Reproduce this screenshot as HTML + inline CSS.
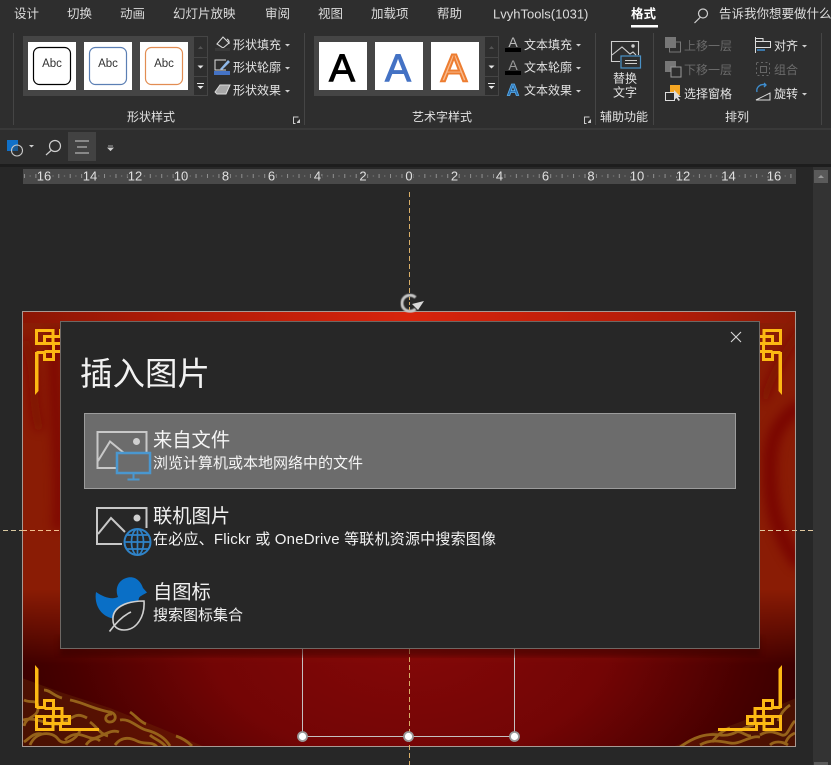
<!DOCTYPE html>
<html><head><meta charset="utf-8"><style>
html,body{margin:0;padding:0;background:#272727;width:831px;height:765px;overflow:hidden}
svg{display:block;font-family:"Liberation Sans","Noto Sans CJK SC",sans-serif}
text{dominant-baseline:central}
.tab{font-size:12.5px;fill:#dcdcdc}
.r{font-size:12px;fill:#e2e2e2}
.d{font-size:12px;fill:#6b6b6b}
.g{font-size:12px;fill:#d8d8d8}
.rul text{font-size:13px;fill:#e0e0e0;text-anchor:middle;stroke:#494949;stroke-width:3px;paint-order:stroke}
.knot{fill:none;stroke:#fdb913;stroke-width:3}
</style></head><body>
<svg width="831" height="765" viewBox="0 0 831 765" xmlns="http://www.w3.org/2000/svg">
<defs>
<linearGradient id="topband" x1="0" x2="1" y1="0" y2="0">
<stop offset="0" stop-color="#8a1604"/><stop offset=".15" stop-color="#a81a06"/><stop offset=".5" stop-color="#d8240c"/><stop offset=".85" stop-color="#b01c08"/><stop offset="1" stop-color="#8a1a05"/>
</linearGradient>
<radialGradient id="bot" gradientUnits="userSpaceOnUse" cx="409" cy="640" r="400" gradientTransform="translate(0 256) scale(1 .6)">
<stop offset="0" stop-color="#840808"/><stop offset=".5" stop-color="#730505"/><stop offset=".85" stop-color="#480000"/><stop offset="1" stop-color="#3a0000"/>
</radialGradient>
<linearGradient id="fade" gradientUnits="userSpaceOnUse" x1="0" x2="0" y1="590" y2="665">
<stop offset="0" stop-color="#000"/><stop offset="1" stop-color="#fff"/>
</linearGradient>
<mask id="fm"><rect x="0" y="590" width="831" height="175" fill="url(#fade)"/></mask>
<pattern id="tick" width="11.44" height="16" patternUnits="userSpaceOnUse" x="12.5" y="169"><rect x="0" y="5" width="1" height="4" fill="#8f8f8f"/><rect x="5.7" y="6.500" width="1" height="1" fill="#8f8f8f"/></pattern>
<g id="knot">
<path d="M35 665L38.500 669V708H35Z" fill="#fdb913"/>
<path class="knot" d="M36.500 707.500H44.500M36.500 716.500H53V729.500H36.500ZM44.500 708.500V700.500H53.500V716.500M44.500 716.500V723.500H62V708.500H44.500M54 716.500H69.500V723.500H60.500V729.500H99"/>
</g>
<filter id="bl"><feGaussianBlur stdDeviation="3"/></filter>
<filter id="bl2"><feGaussianBlur stdDeviation="5"/></filter>
<filter id="bl1"><feGaussianBlur stdDeviation=".4"/></filter>
<clipPath id="slide"><rect x="22" y="311" width="774" height="436"/></clipPath>
</defs>

<!-- ribbon -->
<rect width="831" height="165" fill="#2e2e2e"/>
<rect y="128.500" width="831" height="1" fill="#444"/>
<rect y="164" width="831" height="3" fill="#1d1d1d"/>

<g class="tab">
<text x="14" y="14">设计</text><text x="67" y="14">切换</text><text x="120" y="14">动画</text><text x="173" y="14">幻灯片放映</text><text x="265" y="14">审阅</text><text x="318" y="14">视图</text><text x="371" y="14">加载项</text><text x="437" y="14">帮助</text><text x="493" y="14" style="font-size:13px">LvyhTools(1031)</text>
<text x="631" y="14" style="font-weight:bold;fill:#fff">格式</text>
<text x="719" y="14">告诉我你想要做什么</text>
</g>
<rect x="631" y="25" width="27" height="2.500" fill="#fff"/>
<g fill="none" stroke="#d0d0d0" stroke-width="1.200"><circle cx="703" cy="13.500" r="4.500"/><path d="M700 17.500L694.500 23"/></g>

<!-- separators -->
<g stroke="#454545"><path d="M13.500 33V125M304.500 33V125M595.500 33V125M653.500 33V125M821.500 33V125"/></g>

<!-- shape gallery -->
<rect x="23" y="36" width="170" height="60" fill="#454545"/>
<rect x="28" y="42" width="48" height="48" fill="#fff"/><rect x="84" y="42" width="48" height="48" fill="#fff"/><rect x="140" y="42" width="48" height="48" fill="#fff"/>
<rect x="33.500" y="47.500" width="37" height="37" rx="6" fill="#fff" stroke="#000" stroke-width="1.200"/>
<rect x="89.500" y="47.500" width="37" height="37" rx="6" fill="#fff" stroke="#5b7fb4" stroke-width="1.200"/>
<rect x="145.500" y="47.500" width="37" height="37" rx="6" fill="#fff" stroke="#e28d52" stroke-width="1.200"/>
<g font-size="11.500" fill="#333" text-anchor="middle"><text x="52" y="64">Abc</text><text x="108" y="64">Abc</text><text x="164" y="64">Abc</text></g>
<g stroke="#454545" fill="none"><rect x="193.500" y="36.500" width="14" height="59"/><path d="M193.500 57.500H207.500M193.500 76.500H207.500"/></g>
<path d="M198 49l2.500-3 2.500 3z" fill="#555"/><path d="M197.500 65.500h6l-3 3z" fill="#e6e6e6"/><path d="M197 83.500h7" stroke="#e6e6e6"/><path d="M197.500 86h6l-3 3z" fill="#e6e6e6"/>

<!-- shape commands -->
<path d="M217 44l6-7 6 6-6 5z" fill="none" stroke="#d8d8d8" stroke-width="1.100"/><path d="M227 39c2 1 2.500 3 2 5" fill="none" stroke="#d8d8d8"/><rect x="215" y="48" width="15" height="3" fill="#3a3a3a"/>
<path d="M226 60h-11v10h11" fill="none" stroke="#ddd"/><path d="M220 69l8-9 2 2-8 8z" fill="#8fb8e8"/><rect x="214" y="71" width="16" height="4" fill="#4472c4"/>
<path d="M215 92l5-7h10l-4 9h-9z" fill="#a8a8a8" stroke="#dcdcdc"/>
<g class="r"><text x="233" y="45">形状填充</text><text x="233" y="67.500">形状轮廓</text><text x="233" y="90.500">形状效果</text><text x="127" y="117">形状样式</text></g>
<path d="M285 44h5l-2.500 2.500zM285 67h5l-2.500 2.500zM285 90h5l-2.500 2.500z" fill="#cfcfcf"/>
<g fill="none" stroke="#ccc"><path d="M293.500 119.500v-2.500h5M293.500 119.500v4h2"/></g><path d="M297 122l3-3v4h-3z" fill="#ccc"/>

<!-- art gallery -->
<rect x="314" y="36" width="170" height="60" fill="#454545"/>
<rect x="319" y="42" width="48" height="48" fill="#fff"/><rect x="375" y="42" width="48" height="48" fill="#fff"/><rect x="431" y="42" width="48" height="48" fill="#fff"/>
<g font-size="39" text-anchor="middle" font-family="'Liberation Sans',sans-serif">
<text x="342" y="69" fill="#000" stroke="#000" stroke-width="1">A</text>
<text x="398" y="69" fill="#4472c4" stroke="#4472c4" stroke-width="1">A</text>
<text x="454" y="69" fill="#f8bd92" stroke="#ed7d31" stroke-width="2">A</text>
</g>
<g stroke="#454545" fill="none"><rect x="484.500" y="36.500" width="14" height="59"/><path d="M484.500 57.500H498.500M484.500 76.500H498.500"/></g>
<path d="M489 49l2.500-3 2.500 3z" fill="#555"/><path d="M488.500 65.500h6l-3 3z" fill="#e6e6e6"/><path d="M488 83.500h7" stroke="#e6e6e6"/><path d="M488.500 86h6l-3 3z" fill="#e6e6e6"/>

<g font-size="14" text-anchor="middle" font-family="'Liberation Sans',sans-serif" fill="#bbb"><text x="513" y="42">A</text><text x="513" y="65" fill="#999">A</text></g>
<rect x="505" y="48" width="16" height="4" fill="#000"/><rect x="505" y="71" width="16" height="4" fill="#000"/>
<text x="513" y="90" font-size="17" font-weight="bold" text-anchor="middle" fill="#2a6fb0" stroke="#5ab0f0" stroke-width=".8" font-family="'Liberation Sans',sans-serif">A</text>
<g class="r"><text x="524" y="45">文本填充</text><text x="524" y="67.500">文本轮廓</text><text x="524" y="90.500">文本效果</text><text x="412" y="117">艺术字样式</text></g>
<path d="M576 44h5l-2.500 2.500zM576 67h5l-2.500 2.500zM576 90h5l-2.500 2.500z" fill="#cfcfcf"/>
<g fill="none" stroke="#ccc"><path d="M584.500 119.500v-2.500h5M584.500 119.500v4h2"/></g><path d="M588 122l3-3v4h-3z" fill="#ccc"/>

<!-- alt text -->
<g fill="none" stroke="#cfcfcf" stroke-width="1.100"><path d="M620 61.500H611.500V41.500H638.500V55"/><path d="M612 55l10-8 8 7 3-2 3 3"/></g><circle cx="633" cy="46" r="1.700" fill="#cfcfcf"/>
<rect x="621" y="56" width="19.500" height="12" fill="#2e2e2e" stroke="#4a92c8" stroke-width="1.200"/><path d="M625 60.500h12M625 63.500h12" stroke="#cfcfcf"/>
<g class="r"><text x="613" y="78.500">替换</text><text x="613" y="92.500">文字</text><text x="600" y="117">辅助功能</text><text x="725" y="117">排列</text></g>

<!-- arrange -->
<rect x="665" y="37" width="11" height="11" fill="#777"/><path d="M676 42h4.500v10h-11v-4" fill="none" stroke="#777"/>
<rect x="665" y="61" width="11" height="11" fill="#777"/><rect x="671" y="67" width="10" height="10" fill="#2e2e2e" stroke="#999"/>
<rect x="670" y="85" width="10" height="10" fill="#f5a623"/><rect x="665.500" y="92.500" width="9" height="8" fill="#2e2e2e" stroke="#ddd"/><path d="M674 90l0 10 2.500-2 2 3 1.500-1-2-3h3z" fill="#ddd"/>
<g class="d"><text x="684" y="46">上移一层</text><text x="684" y="70">下移一层</text><text x="774" y="70">组合</text></g>
<g class="r"><text x="684" y="94">选择窗格</text><text x="774" y="46">对齐</text><text x="774" y="94">旋转</text></g>
<path d="M755.500 37V53" stroke="#ddd"/><g fill="none" stroke="#ddd"><path d="M756 38.500h7v3M756 47.500h14.500v-6H756"/></g><path d="M757 50h8" stroke="#3e8ed0" stroke-width="1.500"/>
<g fill="none" stroke="#666"><rect x="756.500" y="62.500" width="13" height="13" stroke-dasharray="2 2.500"/><rect x="760.500" y="66.500" width="6" height="6"/></g>
<path d="M757 92a6 6 0 0 1 8-7M764 83l2 2-2 2" fill="none" stroke="#3e8ed0" stroke-width="1.300"/><path d="M756 100l14-7v7z" fill="none" stroke="#ddd"/>
<path d="M802 45h5l-2.500 2.500zM802 93h5l-2.500 2.500z" fill="#cfcfcf"/>

<!-- toolbar -->
<rect x="7" y="140" width="11" height="11" fill="#1070c8"/><circle cx="17" cy="150.500" r="5.500" fill="#2e2e2e" fill-opacity=".35" stroke="#c8c8c8" stroke-width="1.100"/>
<path d="M29 145h5l-2.500 2.500z" fill="#d0d0d0"/>
<g fill="none" stroke="#cfcfcf" stroke-width="1.200"><circle cx="55" cy="146" r="5.500"/><path d="M51 150.500L46 155"/></g>
<rect x="68" y="132" width="28" height="29" fill="#424242"/>
<path d="M75 141h14M77 147h10M75 153h14" stroke="#cfcfcf"/>
<path d="M108 146h5M108 148h5l-2.500 2.500z" stroke="#d0d0d0" stroke-width=".8" fill="#d0d0d0"/>

<!-- canvas -->
<rect y="167" width="831" height="598" fill="#272727"/>
<rect x="813" y="167" width="18" height="598" fill="#333"/>
<rect x="814" y="170" width="14" height="13" fill="#5a5a5a"/><path d="M818 178l3-3 3 3z" fill="#9a9a9a"/>
<rect x="814" y="762" width="14" height="3" fill="#5a5a5a"/>

<!-- ruler -->
<rect x="23" y="169" width="773" height="15" fill="#494949"/>
<rect x="23" y="169" width="773" height="15" fill="url(#tick)"/>
<g class="rul">
<text x="44" y="176">16</text><text x="90" y="176">14</text><text x="135" y="176">12</text><text x="181" y="176">10</text><text x="225.500" y="176">8</text><text x="271.500" y="176">6</text><text x="317.500" y="176">4</text><text x="363" y="176">2</text><text x="409" y="176">0</text><text x="454.500" y="176">2</text><text x="499.500" y="176">4</text><text x="545.500" y="176">6</text><text x="591" y="176">8</text><text x="637" y="176">10</text><text x="683" y="176">12</text><text x="728.500" y="176">14</text><text x="774" y="176">16</text>
</g>

<!-- slide -->
<g clip-path="url(#slide)">
<rect x="22" y="311" width="774" height="436" fill="#8a1c05"/>
<rect x="22" y="311" width="774" height="12" fill="url(#topband)"/>
<g filter="url(#bl2)" fill="none" opacity=".8">
<path d="M56 330C50 380 62 440 58 530" stroke="#7a0303" stroke-width="10"/>
<path d="M24 340C38 370 30 400 40 430" stroke="#7c0a02" stroke-width="9"/>
<path d="M800 405C775 425 770 440 770 470C770 510 780 540 800 565" stroke="#760303" stroke-width="14"/>
<path d="M800 330C780 360 770 380 764 400" stroke="#7a0802" stroke-width="8"/>
</g>
<rect x="22" y="590" width="774" height="157" fill="url(#bot)" mask="url(#fm)"/>
<!-- floral -->
<path d="M22 678L60 692L110 708L160 728L205 747H22Z" fill="#7a3c08" opacity=".28"/>
<path d="M672 747L740 722L796 698V747Z" fill="#7a3c08" opacity=".28"/>
<g fill="none" stroke="#96621a" stroke-width="2.800">
<path d="M24 700c8 4 14-2 14 8s-12 8-14 18"/><path d="M23 720c14-4 24 6 36 4s14-14 28-6"/><path d="M30 745c6-14 22-14 28-6s18 0 22-8"/>
<path d="M70 700c12 2 26 10 40 12c8 2 6 10 0 10s-6-8 2-8"/><path d="M65 740c10-10 18-4 26-2s18-10 28-6"/><path d="M120 720c10-2 18 8 26 10s18 6 24 16"/><path d="M115 745c6-8 14-8 22-4s16 0 20 6"/><path d="M44 690c6 0 10 6 18 8"/>
<path d="M86 745c4-6 10-8 14-4"/><path d="M150 735c4 4 12 6 16 12"/><path d="M24 742c6-4 10-10 18-8"/><path d="M90 722c6 4 10 12 18 14"/><path d="M130 712c6 4 10 10 16 12"/><path d="M176 736c6 2 12 6 16 10"/>
<path d="M680 747c14-10 26-14 40-12s22-8 34-10"/><path d="M700 745c10-6 20-4 30-2s20-8 30-6"/><path d="M760 735c10-6 16-2 22 0s8-10 13-14"/><path d="M785 745c2-8 6-10 10-12"/><path d="M790 705c-6 4-10 10-12 16"/><path d="M735 732c6-2 10 4 16 4"/>
<path d="M712 742c6-8 12-12 18-14"/><path d="M770 745c4-4 12-4 18 0"/>
</g>
<use href="#knot"/>
<use href="#knot" transform="translate(817 0) scale(-1 1)"/>
<use href="#knot" transform="translate(0 1060) scale(1 -1)"/>
<use href="#knot" transform="translate(817 1060) scale(-1 -1)"/>
</g>
<rect x="22.500" y="311.500" width="773" height="435" fill="none" stroke="#a89a94"/>

<!-- guides -->
<path d="M409.500 192V296" stroke="#d8ae68" stroke-dasharray="5 3"/>
<path d="M3 530.500H22" stroke="#d8c8a0" stroke-dasharray="5 3"/><path d="M22 530.500H60" stroke="#f0c090" stroke-dasharray="5 3"/><path d="M760 530.500H813" stroke="#e0c8a0" stroke-dasharray="5 3"/>
<path d="M409.500 649V765" stroke="#d8ae68" stroke-dasharray="5 3"/>

<!-- selection -->
<g fill="none" stroke="#c4c0c0"><path d="M302.500 649V736.500H514.500V649"/></g>
<g fill="#fff" stroke="#9a9a9a" stroke-width="1.800"><circle cx="302.500" cy="736.500" r="4.500"/><circle cx="408.500" cy="736.500" r="4.500"/><circle cx="514.500" cy="736.500" r="4.500"/></g>

<!-- rotate -->
<path d="M415.500 309A8 8 0 1 1 415.500 297.500" fill="none" stroke="#c6c6c6" stroke-width="3" filter="url(#bl1)"/>
<path d="M412 304L424 301L418 310Z" fill="#d8d8d8"/>
<path d="M409.500 297V311" stroke="#d8ae68" stroke-dasharray="3 2"/>

<!-- dialog -->
<rect x="60" y="636" width="700" height="20" fill="#300000" opacity=".5" filter="url(#bl)"/>
<rect x="60.500" y="321.500" width="699" height="327" fill="#272727" stroke="#6e6864"/>
<path d="M731 332L741 342M741 332L731 342" stroke="#d8d8d8" stroke-width="1.100"/>
<text x="80" y="374" font-size="32.500" fill="#f2f2f2">插入图片</text>

<rect x="84.500" y="413.500" width="651" height="75" fill="#6c6c6c" stroke="#9c9c9c"/>
<text x="153" y="441" font-size="19.300" fill="#f5f5f5">来自文件</text>
<text x="153" y="463.500" font-size="15" fill="#f5f5f5">浏览计算机或本地网络中的文件</text>
<text x="153" y="517" font-size="19.300" fill="#f2f2f2">联机图片</text>
<text x="153" y="539.500" font-size="15" fill="#f2f2f2" textLength="343">在必应、Flickr 或 OneDrive 等联机资源中搜索图像</text>
<text x="153" y="593" font-size="19.300" fill="#f2f2f2">自图标</text>
<text x="153" y="615.500" font-size="15" fill="#f2f2f2">搜索图标集合</text>

<!-- icon 1 -->
<g fill="none" stroke="#c8c8c8" stroke-width="2">
<path d="M117 468H97.500V432H146.500V453"/><path d="M98 461L110 441.500L124 453"/>
</g>
<circle cx="136.500" cy="441.500" r="3.500" fill="#d0d0d0"/>
<rect x="117" y="453" width="33" height="20" fill="#6c6c6c" stroke="#4a97cf" stroke-width="2.500"/>
<path d="M133.500 474V479M127.500 479.500H139.500" stroke="#4a97cf" stroke-width="2"/>

<!-- icon 2 -->
<g fill="none" stroke="#c8c8c8" stroke-width="2">
<path d="M122 544H97V508H146.500V528"/><path d="M98 534L111 518L125 532"/>
</g>
<circle cx="137" cy="518" r="3.500" fill="#d0d0d0"/>
<g fill="#272727" stroke="#2f83c8" stroke-width="2"><circle cx="137.500" cy="542" r="13"/></g>
<g fill="none" stroke="#2f83c8" stroke-width="1.700"><ellipse cx="137.500" cy="542" rx="6" ry="13"/><path d="M124.500 542H150.500M126.500 535H148.500M126.500 549H148.500M137.500 529V555"/></g>

<!-- icon 3 -->
<path d="M96 592C103 597 112 600 118 597C115 590 117 580 128 577.500C136 576 141 582 143 588L147 592.500C143 595 140 596 139 598C138 606 128 614 118 617C113 620 114 623 113 618.500C100 616 94 604 96 592Z" fill="#0a6fc6"/>
<path d="M113 620C112 608 125 601 144 601C145 616 137 630 124 630C117 630 113 626 113 620Z" fill="#272727" stroke="#d0d0d0" stroke-width="1.600"/>
<path d="M109.500 631.500C115 624 122 616 131 612" fill="none" stroke="#d0d0d0" stroke-width="1.600"/>
</svg>
</body></html>
